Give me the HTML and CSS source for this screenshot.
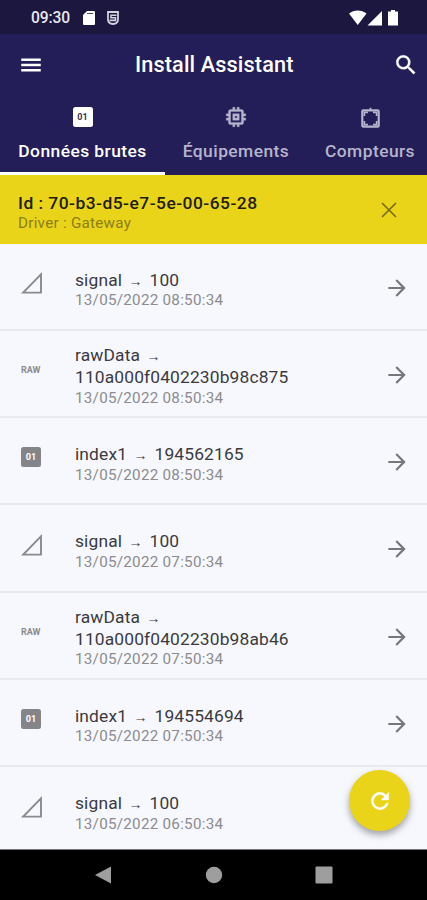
FILE: index.html
```html
<!DOCTYPE html>
<html lang="fr">
<head>
<meta charset="utf-8">
<title>Install Assistant</title>
<link rel="stylesheet" href="styles.css">
</head>
<body>
<svg class="defs" aria-hidden="true">
  <symbol id="arrow" viewBox="0 0 24 24"><path d="M12 4l-1.410 1.410L16.170 11H4v2h12.170l-5.580 5.590L12 20l8-8z"/></symbol>
  <symbol id="signal" viewBox="0 0 26 26"><path d="M5.200 22.600H23V4.400z" fill="none" stroke="currentColor" stroke-width="1.900"/></symbol>
</svg>
<div class="screen">
  <div class="status">
    <span class="clock">09:30</span>
    <svg class="sd" viewBox="0 0 12 14"><path d="M4 0h7a1 1 0 0 1 1 1v12a1 1 0 0 1-1 1H1a1 1 0 0 1-1-1V4z"/><path d="M4 2.500h6" stroke="#1b173f" stroke-width=".8"/></svg>
    <svg class="shield" viewBox="0 0 12 14"><path d="M1 1h10v7.500c0 2.500-2 4.300-5 4.500-3-.200-5-2-5-4.500z" fill="none" stroke="#d3d2de" stroke-width="1.800"/><path d="M9.500 4.200H4v2.600h4.500v2.600H2.500" fill="none" stroke="#d3d2de" stroke-width="1.600"/></svg>
    <svg class="radios" viewBox="0 0 50 16"><path d="M0 3.400C5-.5 12.500-.5 17.500 3.400L8.750 15z"/><path d="M18.500 15.500H33V1z"/><path d="M42 0h4v1.500h3v14H39V1.500h3z"/></svg>
  </div>
  <header class="appbar">
    <svg class="icon" viewBox="0 0 24 24"><path d="M3 18h18v-2.400H3zm0-4.800h18v-2.400H3zM3 6v2.400h18V6z"/></svg>
    <h1>Install Assistant</h1>
    <svg class="icon" viewBox="0 0 24 24"><path d="M15.500 14h-.790l-.280-.270A6.471 6.471 0 0 0 16 9.500 6.500 6.500 0 1 0 9.500 16c1.610 0 3.090-.590 4.230-1.570l.270.280v.790l5 4.990L20.490 19zm-6 0a4.500 4.500 0 1 1 0-9 4.500 4.500 0 0 1 0 9z" stroke="#fff" stroke-width=".3"/></svg>
  </header>
  <nav class="tabs">
    <div class="tab active"><span class="badge">01</span><span class="label">Données brutes</span></div>
    <div class="tab"><svg class="icon" viewBox="0 0 24 24"><path fill-rule="evenodd" stroke="currentColor" stroke-width=".3" d="M15 9H9v6h6zm-2 4h-2v-2h2zm8-2V9h-2V7a2 2 0 0 0-2-2h-2V3h-2v2h-2V3H9v2H7a2 2 0 0 0-2 2v2H3v2h2v2H3v2h2v2a2 2 0 0 0 2 2h2v2h2v-2h2v2h2v-2h2a2 2 0 0 0 2-2v-2h2v-2h-2v-2zm-4 6H7V7h10z"/></svg><span class="label">Équipements</span></div>
    <div class="tab"><svg class="icon" viewBox="0 0 26 26"><path fill="none" stroke="currentColor" stroke-width="2.200" d="M6.300 6.300h14.400a1 1 0 0 1 1 1v14.400a1 1 0 0 1-1 1H6.300a1 1 0 0 1-1-1V7.300a1 1 0 0 1 1-1z"/><path d="M12.600 3.800h1.800v2.500h-1.800zM6.500 7.500H11v1.700H8.200V12H6.500zm9.500 0h4.500V12h-1.700V9.200H16zM6.500 17h1.700v2.800H11v1.700H6.500zm12.300 0h1.700v4.500H16v-1.700h2.800z"/></svg><span class="label">Compteurs</span></div>
  </nav>
  <section class="device">
    <div><div class="device-id">Id : 70-b3-d5-e7-5e-00-65-28</div><div class="device-driver">Driver : Gateway</div></div>
    <svg class="icon" viewBox="0 0 26 26"><path d="M6 6l14 14M20 6L6 20" fill="none" stroke="currentColor" stroke-width="1.600"/></svg>
  </section>
  <main class="list">
    <div class="row"><div class="lead"><svg class="icon"><use href="#signal"/></svg></div><div class="body"><div class="title">signal <i>→</i> 100</div><div class="date">13/05/2022 08:50:34</div></div><svg class="icon go"><use href="#arrow"/></svg></div>
    <div class="row tall"><div class="lead"><span class="raw">RAW</span></div><div class="body"><div class="title">rawData <i>→</i><br>110a000f0402230b98c875</div><div class="date">13/05/2022 08:50:34</div></div><svg class="icon go"><use href="#arrow"/></svg></div>
    <div class="row"><div class="lead"><span class="badge">01</span></div><div class="body"><div class="title">index1 <i>→</i> 194562165</div><div class="date">13/05/2022 08:50:34</div></div><svg class="icon go"><use href="#arrow"/></svg></div>
    <div class="row"><div class="lead"><svg class="icon"><use href="#signal"/></svg></div><div class="body"><div class="title">signal <i>→</i> 100</div><div class="date">13/05/2022 07:50:34</div></div><svg class="icon go"><use href="#arrow"/></svg></div>
    <div class="row tall"><div class="lead"><span class="raw">RAW</span></div><div class="body"><div class="title">rawData <i>→</i><br>110a000f0402230b98ab46</div><div class="date">13/05/2022 07:50:34</div></div><svg class="icon go"><use href="#arrow"/></svg></div>
    <div class="row"><div class="lead"><span class="badge">01</span></div><div class="body"><div class="title">index1 <i>→</i> 194554694</div><div class="date">13/05/2022 07:50:34</div></div><svg class="icon go"><use href="#arrow"/></svg></div>
    <div class="row"><div class="lead"><svg class="icon"><use href="#signal"/></svg></div><div class="body"><div class="title">signal <i>→</i> 100</div><div class="date">13/05/2022 06:50:34</div></div></div>
  </main>
  <button class="fab" aria-label="Actualiser"><svg class="icon" viewBox="0 0 24 24"><path d="M17.650 6.350A7.958 7.958 0 0 0 12 4a8 8 0 1 0 7.730 10h-2.080A6 6 0 1 1 12 6c1.660 0 3.140.690 4.220 1.780L13 11h7V4z" stroke="#fff" stroke-width=".4"/></svg></button>
  <footer class="navbar">
    <svg viewBox="0 0 18 18"><path d="M1 9L17 .5v17z"/></svg>
    <svg viewBox="0 0 18 18"><circle cx="9" cy="9" r="8.200"/></svg>
    <svg viewBox="0 0 18 18"><rect x=".5" y=".5" width="17" height="17" rx="1"/></svg>
  </footer>
</div>
</body>
</html>
```
FILE: styles.css
```css
* { box-sizing: border-box; }
body { margin: 0; font-family: Roboto, sans-serif; }
svg { display: block; fill: currentColor; flex: none; }
.defs { position: absolute; width: 0; height: 0; }
.screen { position: relative; width: 427px; height: 900px; display: flex; flex-direction: column; overflow: hidden; background: #f7f8fd; }
.icon { width: 26px; height: 26px; }

.status { height: 34px; flex: none; background: #1b173f; color: #fff; display: flex; align-items: center; padding: 2px 28px 0 31px; }
.clock { font-size: 15.6px; font-weight: 500; width: 52px; color: #e9e8f0; letter-spacing: -0.1px; }
.sd { width: 12px; height: 14px; }
.shield { width: 12px; height: 14px; margin-left: 12px; }
.radios { width: 50px; height: 16px; margin-left: auto; }

.appbar { height: 61px; flex: none; background: #231e57; color: #fff; display: flex; align-items: center; padding: 0 8px 0 18px; }
.appbar h1 { margin: 0 auto 0 91px; font-size: 21.7px; font-weight: 500; line-height: 26px; letter-spacing: 0.13px; }

.tabs { height: 79.5px; flex: none; background: #231e57; color: #b6b4cd; display: flex; }
.tab { flex: none; display: flex; flex-direction: column; align-items: center; padding-top: 9px; width: 142px; }
.tab.active { width: 165px; color: #fff; border-bottom: 3px solid #fff; }
.label { font-size: 17.4px; font-weight: 500; line-height: 22px; margin-top: 10px; letter-spacing: 0.45px; white-space: nowrap; }
.tab:last-child { width: 126px; }
.badge { display: flex; align-items: center; justify-content: center; width: 20px; height: 20px; border-radius: 2.5px; background: #848489; color: #fff; font-size: 9px; font-weight: 700; }
.tab .badge { margin: 3px; background: #fff; color: #38344f; }

.device { height: 69px; flex: none; background: #ead419; display: flex; justify-content: space-between; padding: 17px 25px 0 18px; color: #776a14; }
.device-id { font-size: 17.4px; font-weight: 500; line-height: 22px; color: #201c08; letter-spacing: 0.48px; }
.device-driver { font-size: 15.2px; line-height: 18px; color: #8c7d16; letter-spacing: 0.27px; }
.device .icon { margin-top: 5px; }

.list { height: 605px; flex: none; overflow: hidden; }
.row { height: 87.25px; display: flex; border-bottom: 2px solid #e9eaf0; padding-right: 17px; }
.lead { width: 75px; padding: 26.5px 0 0 18px; color: #8a8a8e; }
.lead .badge { margin: 2.5px 3px; }
.raw { display: block; font-size: 9px; font-weight: 700; line-height: 26px; padding-left: 3px; color: #8a8a8e; }
.body { flex: 1; padding-top: 26px; }
.tall .body { padding-top: 14.5px; }
.title { font-size: 17.4px; line-height: 21.7px; color: #3a3a3f; letter-spacing: 0.14px; white-space: nowrap; }
.title i { display: inline-block; width: 18.5px; padding-left: 2px; font: 14px/12px "Liberation Sans", sans-serif; letter-spacing: 0; }
.date { font-size: 15.2px; line-height: 19px; color: #8b8b90; letter-spacing: 0.27px; }
.go { margin-top: 31px; color: #77777b; }

.fab { position: absolute; left: 349px; top: 770px; width: 61px; height: 61px; border: 0; border-radius: 50%; background: #ead419; color: #fff; display: flex; align-items: center; justify-content: center; padding: 0; box-shadow: 0 4px 7px rgba(0, 0, 0, .35); }
.navbar { flex: 1; background: #000; color: #9e9e9e; border-top: 1px solid #777; display: flex; justify-content: space-between; align-items: center; padding: 0 94px; }
.navbar svg { width: 18px; height: 18px; }
```
